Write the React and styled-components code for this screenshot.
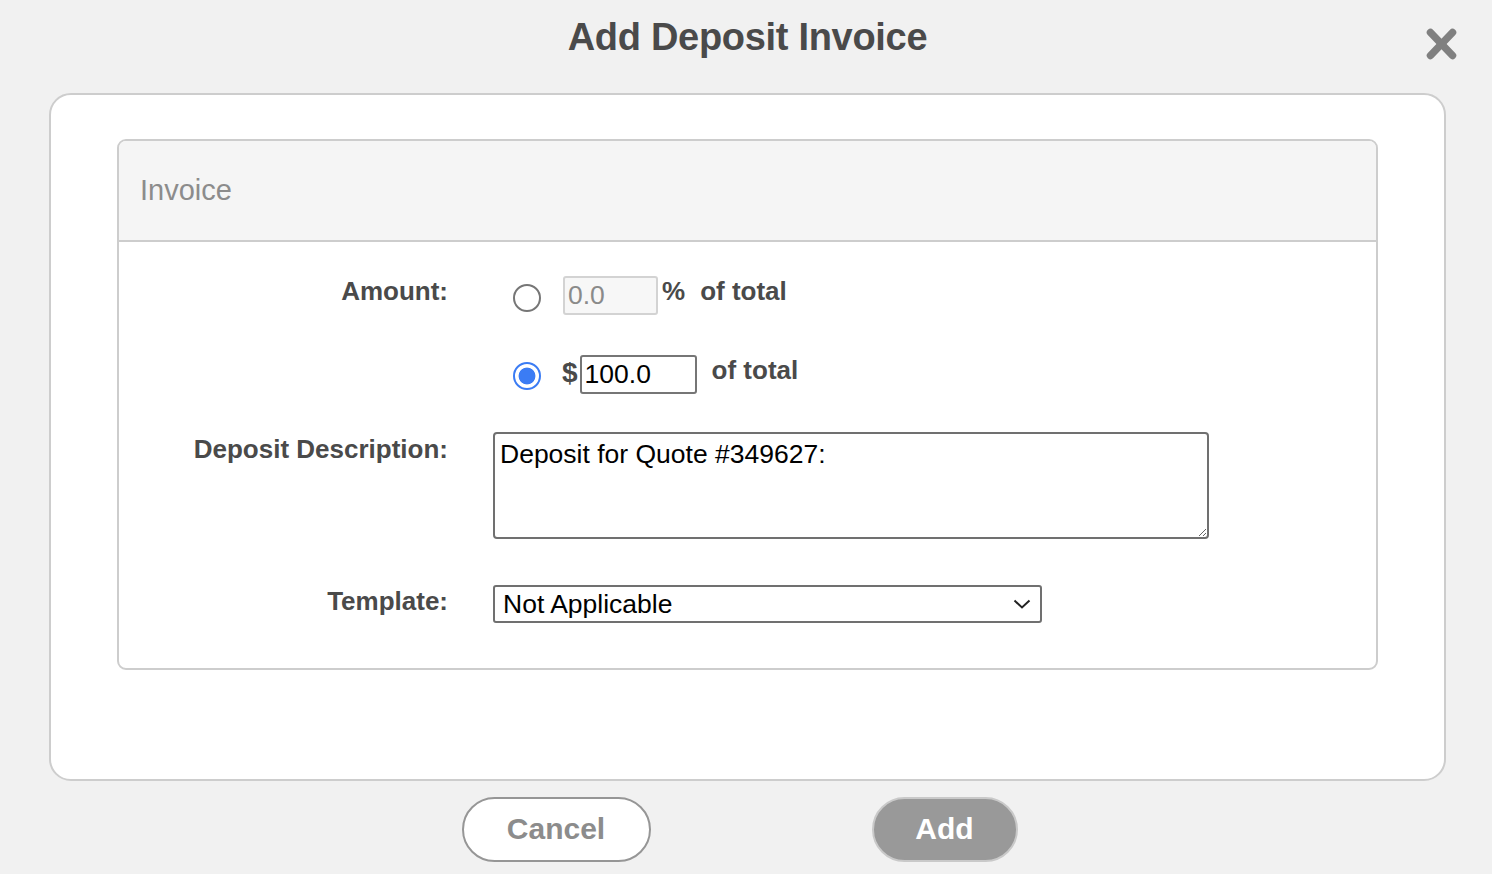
import React from 'react'
import styled, { createGlobalStyle } from 'styled-components'

const GlobalStyle = createGlobalStyle`
  html, body {
    margin: 0;
    padding: 0;
    background: #f1f1f1;
    font-family: "Liberation Sans", Arial, Helvetica, sans-serif;
  }
  * { box-sizing: border-box; }
`

const App = () => {
    return (
        <Page>
            <GlobalStyle />
            <Header>
                <Title>Add Deposit Invoice</Title>
                <CloseButton aria-label="Close">
                    <svg width="31" height="32" viewBox="0 0 31 32">
                        <line x1="4.5" y1="4.5" x2="26.5" y2="27.5" stroke="#808080" strokeWidth="7.5" strokeLinecap="round" />
                        <line x1="26.5" y1="4.5" x2="4.5" y2="27.5" stroke="#808080" strokeWidth="7.5" strokeLinecap="round" />
                    </svg>
                </CloseButton>
            </Header>
            <Card>
                <Panel>
                    <PanelHeader>Invoice</PanelHeader>
                    <PanelBody>
                        <FormGrid>
                            <Label>Amount:</Label>
                            <Options>
                                <OptionRow>
                                    <Radio type="radio" name="amount" $top={8} $right={22} readOnly />
                                    <TextInput $w={95} disabled defaultValue="0.0" />
                                    <BoldText $left={4}>%</BoldText>
                                    <BoldText $left={15}>of total</BoldText>
                                </OptionRow>
                                <OptionRow>
                                    <Radio type="radio" name="amount" $top={7} $right={21} defaultChecked />
                                    <BoldText $big>$</BoldText>
                                    <TextInput $w={117} $left={2} defaultValue="100.0" />
                                    <BoldText $left={15}>of total</BoldText>
                                </OptionRow>
                            </Options>

                            <Label>Deposit Description:</Label>
                            <TextArea defaultValue="Deposit for Quote #349627:" />

                            <Label $top={5}>Template:</Label>
                            <SelectWrap>
                                <Select defaultValue="na">
                                    <option value="na">Not Applicable</option>
                                </Select>
                                <Chevron width="18" height="10" viewBox="0 0 18 10">
                                    <polyline points="1.5,1.5 9,8.5 16.5,1.5" fill="none" stroke="#222" strokeWidth="2" />
                                </Chevron>
                            </SelectWrap>
                        </FormGrid>
                    </PanelBody>
                </Panel>
            </Card>
            <Footer>
                <Button>Cancel</Button>
                <Button $primary>Add</Button>
            </Footer>
        </Page>
    )
}

export default App

const Page = styled.div`
width: 1492px;
height: 874px;
overflow: hidden;
background: #f1f1f1;
padding: 0 46px 0 49px;
`

const Header = styled.div`
position: relative;
height: 93px;
display: flex;
justify-content: center;
padding-top: 15px;
`

const Title = styled.h1`
margin: 0;
font-size: 38px;
line-height: 44px;
font-weight: 700;
letter-spacing: -0.3px;
color: #4a4a4a;
`

const CloseButton = styled.button`
position: absolute;
top: 28px;
right: -11px;
padding: 0;
border: none;
background: transparent;
display: flex;
`

const Card = styled.div`
background: #fff;
border: 2px solid #cdcdcd;
border-radius: 22px;
padding: 44px 66px 109px;
`

const Panel = styled.div`
border: 2px solid #cdcdcd;
border-radius: 9px;
overflow: hidden;
`

const PanelHeader = styled.div`
height: 101px;
background: #f5f5f5;
border-bottom: 2px solid #cdcdcd;
display: flex;
align-items: center;
padding: 0 0 0 21px;
font-size: 29px;
color: #8c8c8c;
`

const PanelBody = styled.div`
padding: 34px 0 45px;
`

const FormGrid = styled.div`
display: grid;
grid-template-columns: 329px 1fr;
column-gap: 45px;
row-gap: 40px;
align-items: start;
`

const Label = styled.div`
text-align: right;
font-size: 26px;
line-height: 30px;
font-weight: 700;
color: #4a4a4a;
margin-top: ${p => (p.$top || 0)}px;
`

const Options = styled.div`
display: flex;
flex-direction: column;
gap: 40px;
`

const OptionRow = styled.div`
display: flex;
align-items: flex-start;
height: 39px;
`

const Radio = styled.input`
appearance: none;
margin: ${p => p.$top}px ${p => p.$right}px 0 20px;
width: 28px;
height: 28px;
border-radius: 50%;
border: 2px solid #767676;
background: #fff;
flex-shrink: 0;

&:checked {
    border-color: #3b7cf4;
    background: radial-gradient(circle, #3b7cf4 0 8px, #fff 8.8px);
}
`

const BoldText = styled.span`
font-size: ${p => (p.$big ? 28 : 26)}px;
line-height: ${p => (p.$big ? 32 : 30)}px;
margin-top: ${p => (p.$big ? 2 : 0)}px;
font-weight: 700;
color: #4a4a4a;
margin-left: ${p => p.$left || 0}px;
white-space: nowrap;
`

const TextInput = styled.input`
width: ${p => p.$w}px;
height: 39px;
margin: 0 0 0 ${p => p.$left || 0}px;
padding: 0 3px;
border: 2px solid #767676;
border-radius: 3px;
font-family: "Liberation Sans", Arial, sans-serif;
font-size: 26.5px;
color: #000;
background: #fff;

&:disabled {
    border-color: #d3d3d3;
    background: #f7f7f7;
    color: #8a8a8a;
}
`

const TextArea = styled.textarea`
display: block;
width: 716px;
height: 107px;
margin: -2px 0 2px;
padding: 5px 5px;
border: 2px solid #707070;
border-radius: 4px;
font-family: "Liberation Sans", Arial, sans-serif;
font-size: 26.5px;
line-height: 30px;
color: #000;
background: #fff;
`

const SelectWrap = styled.div`
position: relative;
width: 549px;
margin-top: 4px;
`

const Select = styled.select`
appearance: none;
display: block;
width: 100%;
height: 38px;
margin: 0;
padding: 0 40px 0 8px;
border: 2px solid #707070;
border-radius: 3px;
font-family: "Liberation Sans", Arial, sans-serif;
font-size: 26.5px;
color: #000;
background: #fff;
`

const Chevron = styled.svg`
position: absolute;
right: 11px;
top: 14px;
pointer-events: none;
`

const Footer = styled.div`
display: flex;
justify-content: center;
gap: 221px;
padding: 16px 16px 0 0;
`

const Button = styled.button`
height: 65px;
min-width: ${p => (p.$primary ? 146 : 189)}px;
border-radius: 33px;
border: 2px solid ${p => (p.$primary ? '#c9c9c9' : '#969696')};
background: ${p => (p.$primary ? '#999999' : '#ffffff')};
color: ${p => (p.$primary ? '#ffffff' : '#8c8c8c')};
font-family: "Liberation Sans", Arial, sans-serif;
font-size: 30px;
font-weight: 700;
padding: 0 0 2px;
`
